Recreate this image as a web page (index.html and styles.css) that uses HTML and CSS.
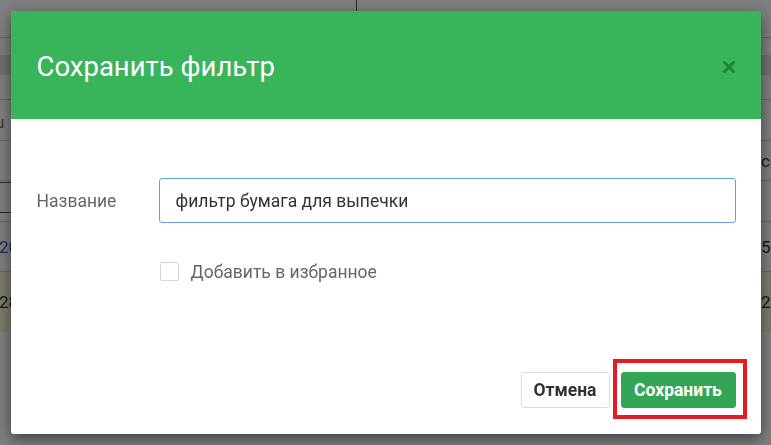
FILE: index.html
```html
<!DOCTYPE html>
<html lang="ru">
<head>
    <meta charset="UTF-8">
    <meta name="viewport" content="width=device-width, initial-scale=1.0">
    <title>Сохранить фильтр</title>
    <link rel="stylesheet" href="styles.css">
</head>
<body>
    <!-- страница под модальным окном -->
    <div class="page">
        <div class="row row-top"><div class="cell cell-split"></div></div>
        <div class="row row-plain"></div>
        <div class="row row-head"></div>
        <div class="row row-gap"></div>
        <div class="row row-sub">
            <span class="edge-left">u</span>
        </div>
        <div class="row row-caption">
            <span class="edge-right">со</span>
        </div>
        <div class="row row-filter">
            <span class="filter-box"></span>
        </div>
        <div class="row row-data">
            <span class="edge-left link">20</span>
            <span class="edge-right">5</span>
        </div>
        <div class="row row-warn">
            <span class="edge-left">28</span>
            <span class="edge-right">2</span>
        </div>
    </div>

    <div class="overlay">
        <div class="modal">
            <div class="modal-header">
                <h4 class="modal-title">Сохранить фильтр</h4>
                <button class="close" type="button">
                    <svg width="12" height="12" viewBox="0 0 12 12">
                        <path d="M1.5 1.5 L10.5 10.5 M10.5 1.5 L1.5 10.5" stroke="currentColor" stroke-width="3" stroke-linecap="square"/>
                    </svg>
                </button>
            </div>
            <div class="modal-body">
                <div class="form-group">
                    <label class="control-label" for="filterName">Название</label>
                    <input class="form-control" type="text" id="filterName" value="фильтр бумага для выпечки">
                </div>
                <div class="form-check">
                    <span class="check-box"></span>
                    <span class="check-label">Добавить в избранное</span>
                </div>
            </div>
            <div class="modal-footer">
                <button class="btn btn-default" type="button">Отмена</button>
                <span class="highlight">
                    <button class="btn btn-success" type="button">Сохранить</button>
                </span>
            </div>
        </div>
    </div>
</body>
</html>
```

FILE: styles.css
```css
* {
    margin: 0;
    padding: 0;
    box-sizing: border-box;
}

body {
    font-family: Roboto, "Noto Sans", sans-serif;
    background: #fff;
    overflow: hidden;
    height: 445px;
}

/* фон страницы */
.page {
    width: 100%;
}

.row {
    position: relative;
    border-bottom: 1px solid #ccc;
    font-size: 17px;
    color: #333;
}

.row-top { height: 38px; }
.row-plain { height: 17px; border-bottom: none; }
.row-head { height: 20px; background: #e2e2e2; border-bottom: none; }
.row-gap { height: 25px; }
.row-sub { height: 41px; }
.row-caption { height: 40px; }
.row-filter { height: 41px; }
.row-data { height: 50px; }
.row-warn { height: 60px; background: #fbf6dc; border-bottom: none; }

.cell-split {
    width: 357px;
    height: 100%;
    border-right: 1px solid #555;
}

.edge-left {
    position: absolute;
    left: -1px;
    top: 50%;
    transform: translateY(-50%);
}

.edge-right {
    position: absolute;
    left: 761px;
    top: 50%;
    transform: translateY(-50%);
}

.row-sub .edge-left {
    left: -5px;
    top: 22px;
    color: #777;
}

.link { color: #2a5f9e; }

.filter-box {
    position: absolute;
    left: -10px;
    top: 1px;
    width: 30px;
    height: 31px;
    border: 1px solid #555;
}

/* модальное окно */
.overlay {
    position: fixed;
    top: 0;
    left: 0;
    right: 0;
    bottom: 0;
    background: rgba(0, 0, 0, 0.5);
    display: flex;
    justify-content: center;
    align-items: flex-start;
    padding-top: 11px;
}

.modal {
    width: 750px;
    background: #fff;
    border-radius: 0 0 3px 3px;
    box-shadow: 0 5px 15px rgba(0, 0, 0, 0.5);
}

.modal-header {
    height: 108px;
    background: #3ab45a;
    display: flex;
    align-items: center;
    justify-content: space-between;
    padding: 0 26px 0 26px;
}

.modal-title {
    color: #fff;
    font-size: 27.5px;
    font-weight: 400;
    padding-top: 2px;
}

.close {
    background: none;
    border: none;
    color: #23803f;
    display: flex;
    padding: 4px 0 0 0;
    cursor: pointer;
}

.modal-body {
    padding: 59px 25px 91px 26px;
}

.form-group {
    display: flex;
    align-items: center;
    height: 45px;
}

.control-label {
    width: 122px;
    font-size: 17.5px;
    color: #666;
}

.form-control {
    flex: 1;
    height: 45px;
    border: 1px solid #66a0dd;
    border-radius: 3px;
    padding: 0 16px;
    font-family: inherit;
    font-size: 17.5px;
    color: #333;
    outline: none;
}

.form-check {
    display: flex;
    align-items: center;
    margin-top: 38px;
    margin-left: 123px;
    height: 20px;
}

.check-box {
    width: 19px;
    height: 19px;
    border: 1px solid #d6d6d6;
    border-radius: 2px;
    margin-right: 12px;
}

.check-label {
    font-size: 17.5px;
    color: #666;
    padding-top: 2px;
}

.modal-footer {
    display: flex;
    justify-content: flex-end;
    gap: 11px;
    padding: 0 25px 26px 0;
}

.btn {
    height: 36px;
    padding: 0 12px;
    font-family: inherit;
    font-size: 17.5px;
    font-weight: 700;
    border-radius: 3px;
    cursor: pointer;
}

.btn-default {
    background: #fff;
    border: 1px solid #ddd;
    color: #333;
    width: 89px;
    padding: 0;
}

.btn-success {
    background: #33a655;
    border: 1px solid #33a655;
    color: #fff;
    width: 115px;
    padding: 0;
}

.highlight {
    position: relative;
    display: flex;
}

.highlight::after {
    content: "";
    position: absolute;
    top: -13px;
    left: -8px;
    right: -11px;
    bottom: -11px;
    border: 4px solid #e31b23;
    pointer-events: none;
}
```
